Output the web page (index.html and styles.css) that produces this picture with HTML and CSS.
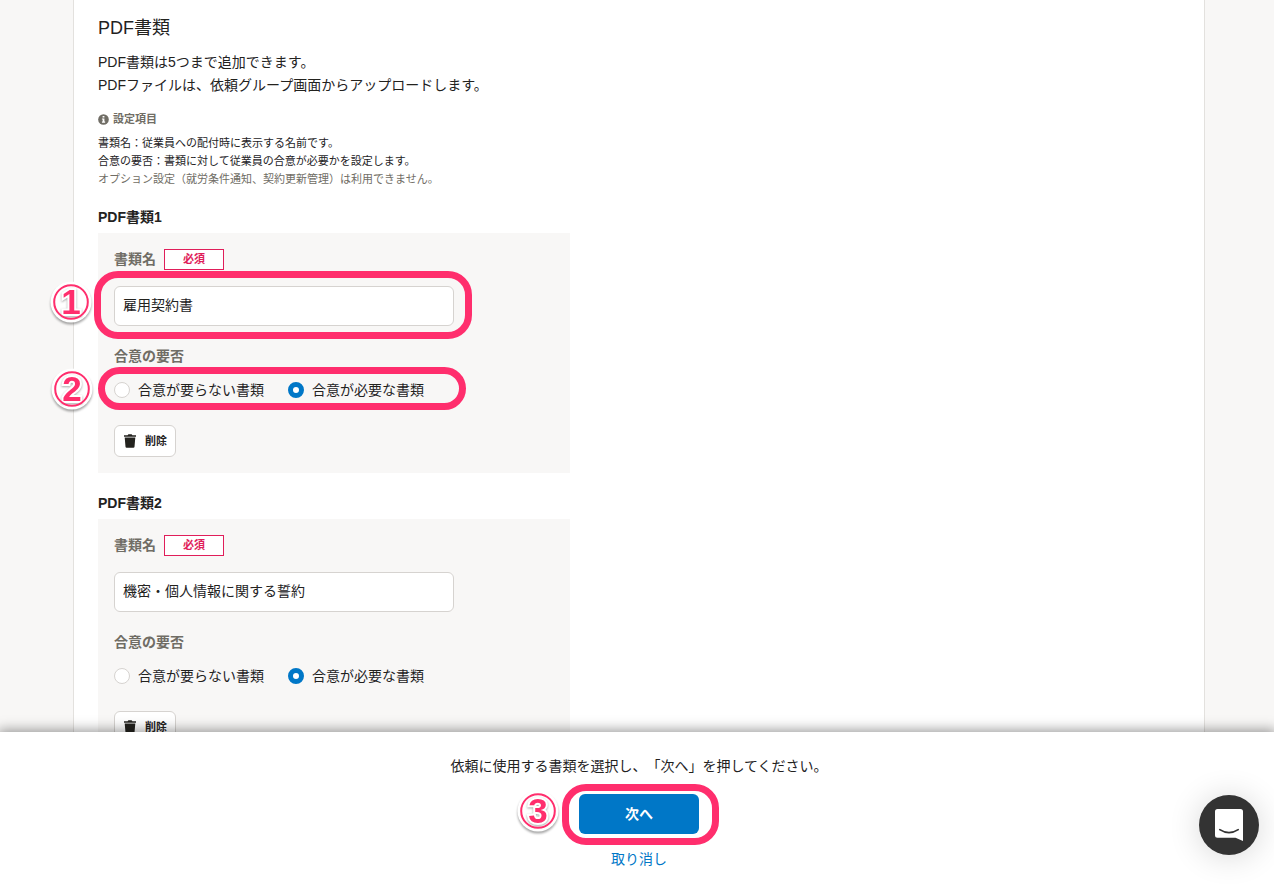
FILE: index.html
```html
<!DOCTYPE html>
<html lang="ja">
<head>
<meta charset="utf-8">
<meta name="viewport" content="width=device-width, initial-scale=1">
<title>PDF書類</title>
<link rel="stylesheet" href="styles.css">
</head>
<body>
<main class="main">
  <section class="card">
    <h1 class="title">PDF書類</h1>
    <p class="intro">PDF書類は5つまで追加できます。<br>PDFファイルは、依頼グループ画面からアップロードします。</p>
    <h2 class="info">
      <svg class="info-icon" viewBox="0 0 12 12" aria-hidden="true"><circle cx="6" cy="6" r="5.800" fill="#706d65"/><path d="M5 2.200h2v1.700H5zM4.300 4.900H7v3.400h.8v1.200H4.300V8.300h.8V6.100h-.8z" fill="#fff"/></svg>
      設定項目
    </h2>
    <div class="notes">
      <p>書類名：従業員への配付時に表示する名前です。</p>
      <p>合意の要否：書類に対して従業員の合意が必要かを設定します。</p>
      <p class="muted">オプション設定（就労条件通知、契約更新管理）は利用できません。</p>
    </div>

    <section class="doc">
      <h2 class="doc-title">PDF書類1</h2>
      <div class="panel">
        <div class="name-row"><label for="name1">書類名</label><span class="required">必須</span></div>
        <div class="field">
          <input class="text" id="name1" type="text" value="雇用契約書">
          <span class="frame frame-input"></span>
          <svg class="step step-1" viewBox="0 0 48 48" role="img" aria-label="1"><circle class="disc" cx="24" cy="24" r="20.500"/><text class="num" x="24" y="36">1</text><circle class="ring" cx="24" cy="24" r="16.800"/></svg>
        </div>
        <fieldset class="choice">
          <legend>合意の要否</legend>
          <div class="radios">
            <label><input type="radio" name="agree1">合意が要らない書類</label>
            <label><input type="radio" name="agree1" checked>合意が必要な書類</label>
            <span class="frame frame-radios"></span>
            <svg class="step step-2" viewBox="0 0 48 48" role="img" aria-label="2"><circle class="disc" cx="24" cy="24" r="20.500"/><text class="num" x="24" y="36">2</text><circle class="ring" cx="24" cy="24" r="16.800"/></svg>
          </div>
        </fieldset>
        <button class="delete" type="button"><svg class="trash" viewBox="0 0 14 14" aria-hidden="true"><path d="M1 1.200h3.600L5.400.300h3.200l.8.900H13v1.600H1zM1.700 3.500h10.600l-.8 9.200q-.1 1-1.100 1H3.600q-1 0-1.100-1z" fill="#23221e"/></svg>削除</button>
      </div>
    </section>

    <section class="doc">
      <h2 class="doc-title">PDF書類2</h2>
      <div class="panel">
        <div class="name-row"><label for="name2">書類名</label><span class="required">必須</span></div>
        <div class="field">
          <input class="text" id="name2" type="text" value="機密・個人情報に関する誓約">
        </div>
        <fieldset class="choice">
          <legend>合意の要否</legend>
          <div class="radios">
            <label><input type="radio" name="agree2">合意が要らない書類</label>
            <label><input type="radio" name="agree2" checked>合意が必要な書類</label>
          </div>
        </fieldset>
        <button class="delete" type="button"><svg class="trash" viewBox="0 0 14 14" aria-hidden="true"><path d="M1 1.200h3.600L5.400.300h3.200l.8.900H13v1.600H1zM1.700 3.500h10.600l-.8 9.200q-.1 1-1.100 1H3.600q-1 0-1.100-1z" fill="#23221e"/></svg>削除</button>
      </div>
    </section>
  </section>
</main>

<footer class="footer">
  <p class="guide">依頼に使用する書類を選択し、「次へ」を押してください。</p>
  <div class="next-wrap">
    <button class="next" type="button">次へ</button>
    <span class="frame frame-next"></span>
    <svg class="step step-3" viewBox="0 0 48 48" role="img" aria-label="3"><circle class="disc" cx="24" cy="24" r="20.500"/><text class="num" x="24" y="36">3</text><circle class="ring" cx="24" cy="24" r="16.800"/></svg>
  </div>
  <a class="cancel" href="#">取り消し</a>
</footer>

<button class="chat" type="button" aria-label="チャット">
  <svg viewBox="0 0 28 32" aria-hidden="true"><path d="M2.500 0h23A2.500 2.500 0 0 1 28 2.500V32l-7.500-3.300h-18A2.500 2.500 0 0 1 0 26.200V2.500A2.500 2.500 0 0 1 2.500 0z" fill="#fff"/><path d="M4.800 20.600q9.200 6 18.400 0" fill="none" stroke="#333" stroke-width="1.700" stroke-linecap="round"/></svg>
</button>
</body>
</html>
```

FILE: styles.css
```css
* { box-sizing: border-box; }

body {
  display: flex;
  flex-direction: column;
  height: 100vh;
  margin: 0;
  background: #f8f7f6;
  color: #23221e;
  font-family: "Liberation Sans", "Noto Sans CJK JP", sans-serif;
  font-size: 14px;
  line-height: 23px;
  text-spacing-trim: space-all;
}

h1, h2, p { margin: 0; }
button, input { font: inherit; color: inherit; }

.main {
  flex: 1;
  min-height: 0;
  padding: 0 69px 0 73px;
  overflow-y: auto;
  scrollbar-width: none;
}

.card {
  min-height: 100%;
  padding: 15px 24px 24px;
  border: solid #e3e1de;
  border-width: 0 1px;
  background: #fff;
}

.title {
  margin-bottom: 9px;
  font-size: 18px;
  font-weight: 400;
  line-height: 27px;
}

.intro { margin-bottom: 13px; }

.info {
  display: flex;
  align-items: center;
  gap: 4px;
  margin-bottom: 6px;
  color: #706d65;
  font-size: 11px;
  line-height: 18px;
}

.info-icon { width: 11px; height: 11px; }

.notes {
  margin-bottom: 17px;
  font-size: 11px;
  line-height: 18px;
}

.muted { color: #706d65; }

.doc + .doc { margin-top: 18px; }

.doc-title {
  margin-bottom: 4px;
  font-size: 14px;
  line-height: 24px;
}

.panel {
  max-width: 472px;
  padding: 16px;
  background: #f8f7f6;
}

.name-row {
  display: flex;
  align-items: center;
  gap: 8px;
  margin-bottom: 16px;
  color: #706d65;
  font-weight: 700;
  line-height: 21px;
}

.required {
  width: 60px;
  border: 1px solid #e01e5a;
  background: #fff;
  color: #e01e5a;
  font-size: 11px;
  line-height: 19px;
  text-align: center;
}

.field {
  position: relative;
  max-width: 340px;
  margin-bottom: 20px;
}

.text {
  display: block;
  width: 100%;
  height: 40px;
  padding: 0 8px 4px;
  border: 1px solid #d6d3d0;
  border-radius: 6px;
  background: #fff;
}

.choice {
  min-width: 0;
  margin: 0 0 24px;
  padding: 0;
  border: 0;
}

.choice legend {
  padding: 0;
  color: #706d65;
  font-weight: 700;
  line-height: 21px;
}

.radios {
  position: relative;
  display: flex;
  gap: 24px;
  padding-top: 12px;
  line-height: 22px;
}

.radios label {
  display: flex;
  align-items: center;
  gap: 8px;
}

.radios input {
  width: 16px;
  height: 16px;
  margin: 0;
  border: 1px solid #d6d3d0;
  border-radius: 50%;
  background: #fff;
  appearance: none;
}

.radios input:checked { border: 5px solid #0077c7; }

.delete {
  display: flex;
  align-items: center;
  gap: 8px;
  height: 32px;
  padding: 0 8px;
  border: 1px solid #d6d3d0;
  border-radius: 6px;
  background: #fff;
  font-size: 11px;
  font-weight: 700;
}

.trash { width: 14px; height: 14px; }

.footer {
  position: relative;
  display: flex;
  flex-direction: column;
  align-items: center;
  padding: 23px 0 13px 4px;
  background: #fff;
  box-shadow: 0 0 12px 2px rgba(0, 0, 0, 0.4);
}

.guide { margin-bottom: 16px; }

.next-wrap {
  position: relative;
  margin-bottom: 14px;
}

.next {
  display: block;
  width: 120px;
  height: 40px;
  border: 0;
  border-radius: 6px;
  background: #0077c7;
  color: #fff;
  font-weight: 700;
}

.cancel {
  color: #0077c7;
  text-decoration: none;
}

/* Highlight frames and step numbers laid over the form */
.frame {
  position: absolute;
  border: 7px solid #ff2e6d;
  pointer-events: none;
}

.frame-input { inset: -15px -18px -13px -20px; border-radius: 24px; }
.frame-radios { top: 0; left: -16px; width: 368px; height: 43px; border-radius: 22px; }
.frame-next { inset: -10px -20px -11px -17px; border-radius: 24px; }

.step {
  position: absolute;
  width: 48px;
  height: 48px;
  overflow: visible;
}

.step-1 { top: -8px; left: -67px; }
.step-2 { top: -2px; left: -66px; }
.step-3 { top: -7px; left: -65px; }

.disc { fill: #fff; filter: drop-shadow(0 2px 1px rgba(0, 0, 0, 0.35)); }
.ring { fill: none; stroke: #ff2e6d; stroke-width: 2px; }

.num {
  fill: #ff2e6d;
  stroke: #fff;
  stroke-width: 4px;
  paint-order: stroke;
  font-family: "Liberation Sans", sans-serif;
  font-size: 35px;
  font-weight: 700;
  text-anchor: middle;
  filter: drop-shadow(0 1px 1px rgba(0, 0, 0, 0.35));
}

.chat {
  position: fixed;
  right: 15px;
  bottom: 29px;
  display: flex;
  align-items: center;
  justify-content: center;
  width: 60px;
  height: 60px;
  padding: 0;
  border: 0;
  border-radius: 50%;
  background: #333;
  box-shadow: 0 2px 32px rgba(0, 0, 0, 0.16);
}

.chat svg { width: 28px; height: 32px; }
```
